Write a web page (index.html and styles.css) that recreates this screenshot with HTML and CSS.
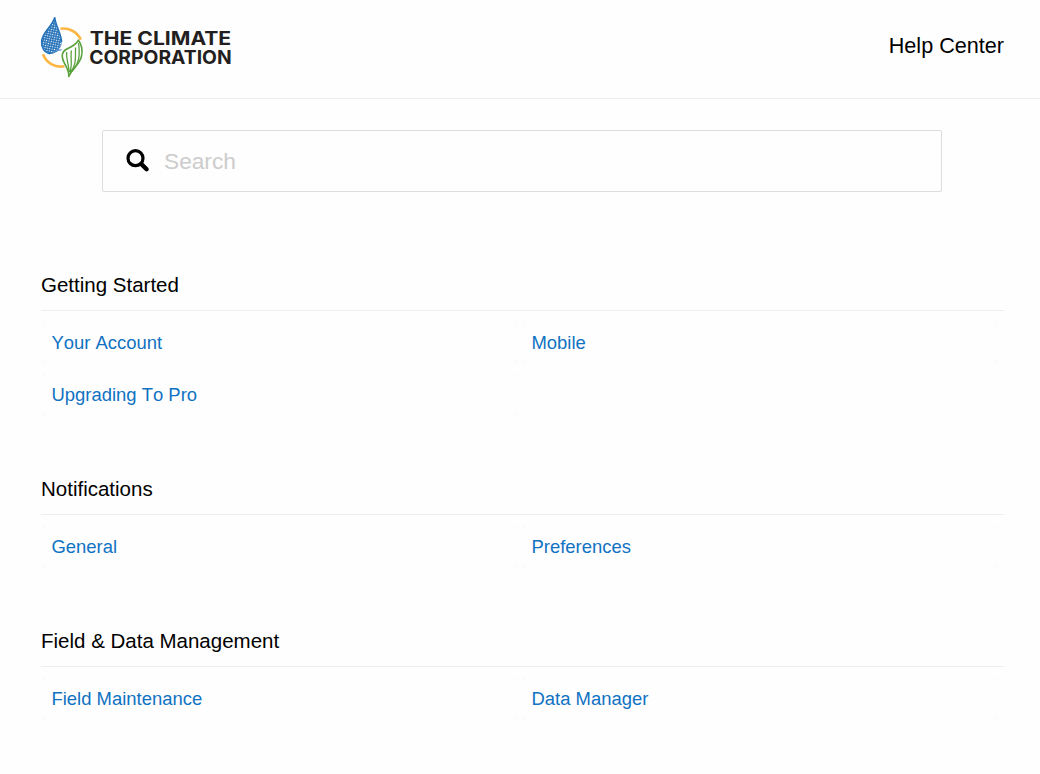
FILE: index.html
```html
<!DOCTYPE html>
<html lang="en">
<head>
<meta charset="utf-8">
<title>Help Center</title>
<link rel="stylesheet" href="styles.css">
</head>
<body>
<header class="header">
  <svg class="logo" width="196" height="66" viewBox="38 14 196 66" role="img" aria-label="The Climate Corporation">
    <defs>
      <pattern id="dots" width="2.4" height="2.4" patternUnits="userSpaceOnUse" patternTransform="rotate(12)">
        <rect width="2.4" height="2.4" fill="#2270b8"/><circle cx="1.2" cy="1.2" r=".68" fill="#fff"/>
      </pattern>
    </defs>
    <g fill="none" stroke="#fbb643" stroke-width="2.6">
      <path d="M60.5 28.7C69 27.6 77 31.6 80.8 39.6"/>
      <path d="M43 54.2C46.5 63 54.5 68 64.5 66.3"/>
    </g>
    <path d="M54.8 17.2C55.2 25 61.6 34 61.6 43C61.4 48 58 51.6 50.5 53.5C44 53 41.3 47.5 41.6 41.5C42 32 52 27 54.8 17.2Z" fill="url(#dots)"/>
    <path d="M50 53.8C44 52.5 41.2 47.5 41.6 41.5C42 32 52 27 54.8 17.2C55.2 25 61.6 34 61.6 42" fill="none" stroke="#2270b8" stroke-width="1.4"/>
    <path d="M50 53.6C55 53.6 57 49.6 61.5 49.8" fill="none" stroke="#2270b8" stroke-width="1"/>
    <g fill="none" stroke="#58a13b" stroke-linejoin="round">
      <path d="M68.8 76.4C69.3 67 61.5 63 62.3 55C63 47 74 49 78.4 40.2C81.5 44 83.2 51 81.3 57C79 65 72 69 68.8 76.4Z" stroke-width="1.6"/>
      <path d="M69.2 72C69 65 66 60 66.6 52M69.8 72C73 65 70 58 71.4 50.5M70 73C77 65 75 57 75.6 47.5M70 73C80 64 80 55 78.6 43" stroke-width="1.3"/>
    </g>
    <g class="logo-text">
      <text x="89.7" y="45" textLength="141.5" lengthAdjust="spacingAndGlyphs">THE CLIMATE</text>
      <text x="89.2" y="63.5" textLength="142.5" lengthAdjust="spacingAndGlyphs">CORPORATION</text>
    </g>
  </svg>
  <a class="help">Help Center</a>
</header>
<main>
  <label class="search">
    <svg class="search-icon" width="24" height="24" viewBox="0 0 24 24" fill="none" stroke="#000">
      <circle cx="9.5" cy="9.2" r="7.5" stroke-width="3.2"/>
      <path d="M15.4 15.1L20.6 20.2" stroke-width="4.4" stroke-linecap="round"/>
    </svg>
    <input class="search-input" type="text" placeholder="Search">
  </label>
  <section class="section">
    <h2>Getting Started</h2>
    <div class="grid"><a>Your Account</a><a>Mobile</a><a>Upgrading To Pro</a></div>
  </section>
  <section class="section">
    <h2>Notifications</h2>
    <div class="grid"><a>General</a><a>Preferences</a></div>
  </section>
  <section class="section">
    <h2>Field &amp; Data Management</h2>
    <div class="grid"><a>Field Maintenance</a><a>Data Manager</a></div>
  </section>
</main>
</body>
</html>
```
FILE: styles.css
```css
* { box-sizing: border-box; }
body {
  margin: 0;
  height: 774px;
  overflow: hidden;
  background: #fefefe;
  color: #000;
  font-family: "Liberation Sans", Arial, sans-serif;
}
.header {
  display: flex;
  justify-content: space-between;
  height: 99px;
  padding: 14px 36px 0 38px;
  border-bottom: 1px solid #eee;
}
.logo { display: block; }
.logo-text {
  font: 700 18.8px Inter, sans-serif;
  fill: #231f20;
}
.help {
  padding-top: 19px;
  font-size: 21.6px;
  line-height: 26px;
}
.search {
  display: flex;
  align-items: center;
  width: 840px;
  height: 62px;
  margin: 31px 0 0 102px;
  padding-left: 23px;
  border: 1px solid #ddd;
  border-radius: 2px;
}
.search-icon { flex: none; }
.search-input {
  flex: 1;
  min-width: 0;
  margin-left: 14px;
  padding: 0;
  border: 0;
  outline: 0;
  background: transparent;
  font: 22.7px "Liberation Sans", Arial, sans-serif;
}
.search-input::placeholder { color: #ccc; opacity: 1; }
.section { width: 963px; margin: 60px 0 0 41px; }
.search + .section { margin-top: 80px; }
h2 {
  height: 39px;
  margin: 0;
  border-bottom: 1px solid #eee;
  font-size: 20.5px;
  font-weight: 400;
  line-height: 25px;
}
.grid {
  display: grid;
  grid-template-columns: 476px 476px;
  grid-auto-rows: 43px;
  gap: 9px 4px;
  padding-top: 10px;
}
.grid a {
  position: relative;
  padding-left: 10.5px;
  color: #1072c2;
  font-size: 18.45px;
  font-kerning: none;
  line-height: 43px;
}
/* Faint rounded cell corners. */
.grid a::before {
  content: "";
  position: absolute;
  inset: 0;
  border: 1px solid #f5f5f5;
  border-radius: 5px;
  mask:
    linear-gradient(#000 0 0) 0 0 / 4px 4px no-repeat,
    linear-gradient(#000 0 0) 100% 0 / 4px 4px no-repeat,
    linear-gradient(#000 0 0) 0 100% / 4px 4px no-repeat,
    linear-gradient(#000 0 0) 100% 100% / 4px 4px no-repeat;
}
```
